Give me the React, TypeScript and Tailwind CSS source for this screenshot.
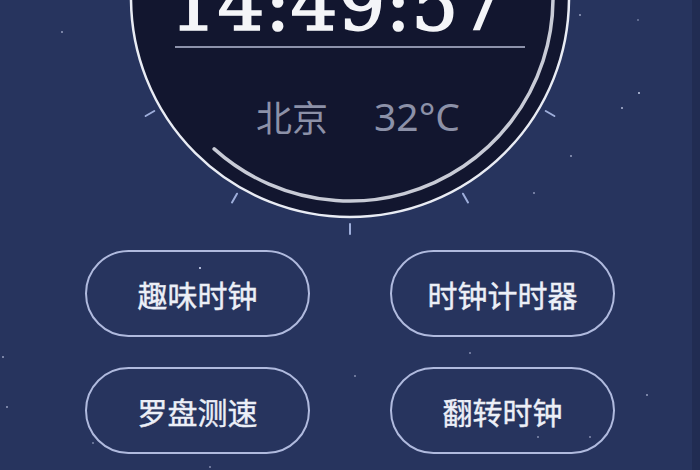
import React from "react";

const stars: [number, number, number, number][] = [
  [62, 32, 2, 0.6],
  [580, 15, 2, 0.6],
  [639, 93, 2.2, 0.85],
  [622, 108, 2, 0.75],
  [489, 87, 1.6, 0.5],
  [571, 156, 2, 0.6],
  [534, 193, 1.8, 0.55],
  [200, 268, 2.6, 1],
  [470, 353, 1.5, 0.5],
  [355, 376, 1.5, 0.5],
  [538, 437, 1.5, 0.5],
  [93, 443, 1.5, 0.45],
  [210, 467, 1.6, 0.5],
  [3, 357, 2, 0.6],
  [7, 407, 2, 0.6],
  [647, 395, 2, 0.6],
  [590, 437, 1.6, 0.5],
  [638, 20, 1.5, 0.4],
  [318, 49, 1.2, 0.4],
];

function Dial() {
  const cx = 350;
  const cy = -2;
  const R = 219;
  const r = 203;
  const rad = (d: number) => (d * Math.PI) / 180;
  const a0 = -20;
  const a1 = 132;
  const p0 = [cx + r * Math.cos(rad(a0)), cy + r * Math.sin(rad(a0))];
  const p1 = [cx + r * Math.cos(rad(a1)), cy + r * Math.sin(rad(a1))];
  const ticks = [30, 60, 90, 120, 150];
  return (
    <svg
      className="absolute inset-0"
      width="700"
      height="240"
      viewBox="0 0 700 240"
    >
      <circle cx={cx} cy={cy} r={R} fill="#12162f" stroke="#e9ecf4" strokeWidth="2.5" />
      <path
        d={`M ${p0[0]} ${p0[1]} A ${r} ${r} 0 0 1 ${p1[0]} ${p1[1]}`}
        fill="none"
        stroke="#c8cbd6"
        strokeWidth="3.5"
        strokeLinecap="round"
      />
      {ticks.map((t) => {
        const x1 = cx + 226 * Math.cos(rad(t));
        const y1 = cy + 226 * Math.sin(rad(t));
        const x2 = cx + 236 * Math.cos(rad(t));
        const y2 = cy + 236 * Math.sin(rad(t));
        return (
          <line
            key={t}
            x1={x1}
            y1={y1}
            x2={x2}
            y2={y2}
            stroke="#9eaedb"
            strokeWidth="2"
            strokeLinecap="round"
          />
        );
      })}
    </svg>
  );
}

function Pill({ label }: { label: string }) {
  return (
    <div className="flex h-[87px] w-[225px] items-center justify-center rounded-full border-2 border-[#b0bade] text-[30px] leading-none text-[#eceff7] [font-family:'Noto_Sans_CJK_SC',sans-serif] [-webkit-text-stroke:0.4px_#eceff7]">
      {label}
    </div>
  );
}

export default function App() {
  return (
    <div className="relative h-[470px] w-[700px] overflow-hidden bg-[linear-gradient(to_right,#27345e_98.8%,#212c52_98.8%)]">
      {stars.map(([x, y, s, o], i) => (
        <div
          key={i}
          className="absolute rounded-full bg-[#dfe6ff]"
          style={{ left: x - s / 2, top: y - s / 2, width: s, height: s, opacity: o }}
        />
      ))}
      <div className="relative h-[240px] w-[700px]">
        <Dial />
        <div className="relative flex flex-col items-center">
          <div className="flex w-[350px] flex-col">
            <div className="ml-[-5px] mt-[-33px] text-[74px] leading-none tracking-[0.5px] text-[#f4f5f8] [font-family:'DejaVu_Serif',serif] [-webkit-text-stroke:1.6px_#f4f5f8]">
              14:49:57
            </div>
            <div className="mt-[5px] h-[2px] w-[350px] bg-[#8d92ab]" />
          </div>
          <div className="ml-[16px] mt-[50px] flex items-center gap-[46px] text-[#8c91a8]">
            <span className="text-[36px] leading-[36px] [font-family:'Noto_Sans_CJK_SC',sans-serif]">北京</span>
            <span className="text-[39px] leading-[36px] [font-family:'Noto_Sans',sans-serif]">32°C</span>
          </div>
        </div>
      </div>
      <div className="relative mt-[10px] grid grid-cols-[225px_225px] gap-x-[80px] gap-y-[30px] pl-[85px]">
        <Pill label="趣味时钟" />
        <Pill label="时钟计时器" />
        <Pill label="罗盘测速" />
        <Pill label="翻转时钟" />
      </div>
    </div>
  );
}
